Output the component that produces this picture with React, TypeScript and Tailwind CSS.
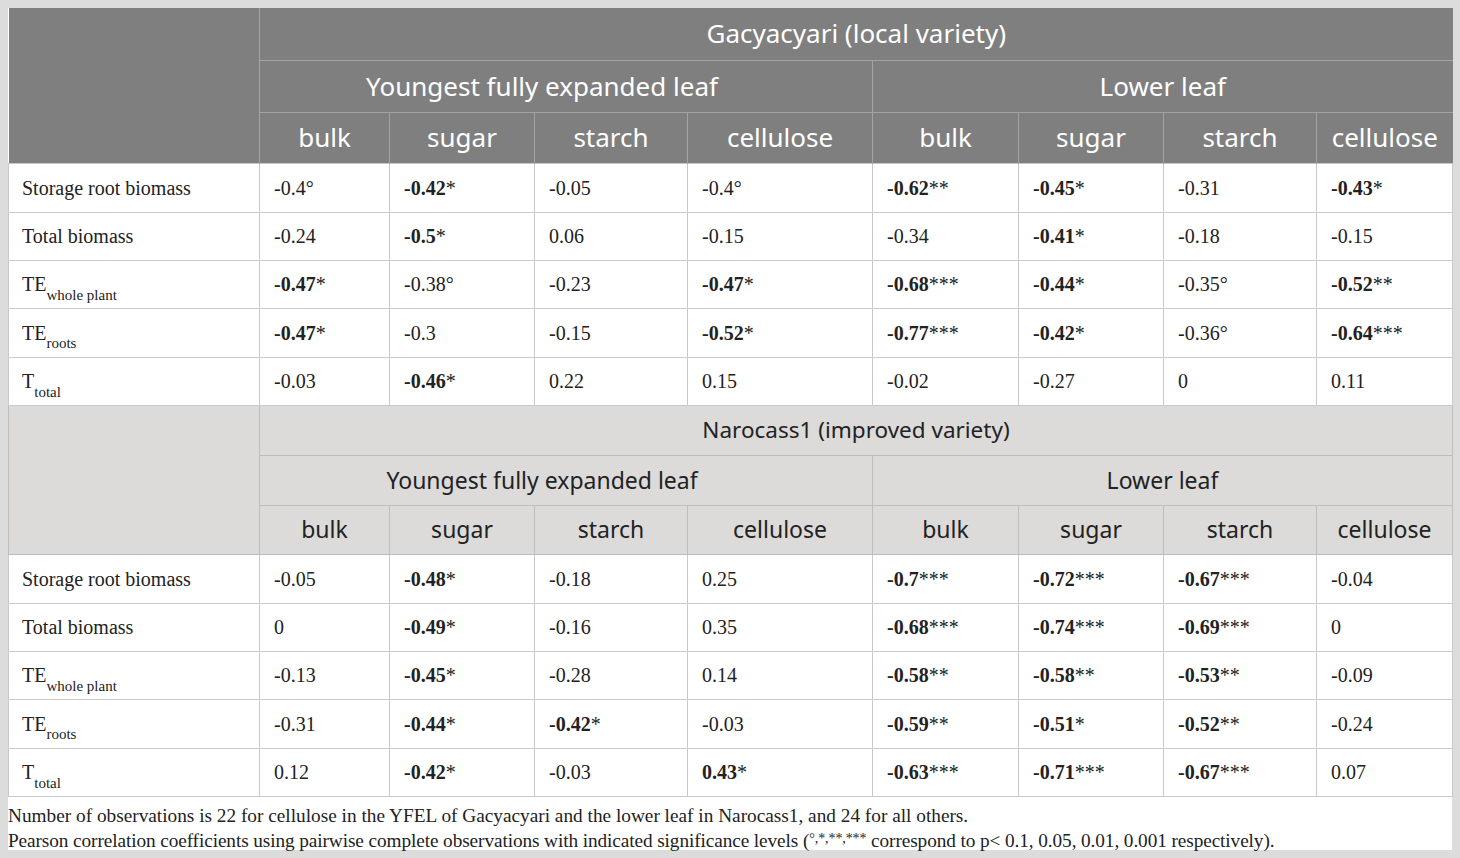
import React from 'react';

type Row = { label: React.ReactNode; values: string[] };

// '!' prefix marks a bold coefficient
const section1: Row[] = [
  { label: 'Storage root biomass', values: ['-0.4°', '!-0.42*', '-0.05', '-0.4°', '!-0.62**', '!-0.45*', '-0.31', '!-0.43*'] },
  { label: 'Total biomass', values: ['-0.24', '!-0.5*', '0.06', '-0.15', '-0.34', '!-0.41*', '-0.18', '-0.15'] },
  { label: 'whole', values: ['!-0.47*', '-0.38°', '-0.23', '!-0.47*', '!-0.68***', '!-0.44*', '-0.35°', '!-0.52**'] },
  { label: 'roots', values: ['!-0.47*', '-0.3', '-0.15', '!-0.52*', '!-0.77***', '!-0.42*', '-0.36°', '!-0.64***'] },
  { label: 'total', values: ['-0.03', '!-0.46*', '0.22', '0.15', '-0.02', '-0.27', '0', '0.11'] },
];

const section2: Row[] = [
  { label: 'Storage root biomass', values: ['-0.05', '!-0.48*', '-0.18', '0.25', '!-0.7***', '!-0.72***', '!-0.67***', '-0.04'] },
  { label: 'Total biomass', values: ['0', '!-0.49*', '-0.16', '0.35', '!-0.68***', '!-0.74***', '!-0.69***', '0'] },
  { label: 'whole', values: ['-0.13', '!-0.45*', '-0.28', '0.14', '!-0.58**', '!-0.58**', '!-0.53**', '-0.09'] },
  { label: 'roots', values: ['-0.31', '!-0.44*', '!-0.42*', '-0.03', '!-0.59**', '!-0.51*', '!-0.52**', '-0.24'] },
  { label: 'total', values: ['0.12', '!-0.42*', '-0.03', '!0.43*', '!-0.63***', '!-0.71***', '!-0.67***', '0.07'] },
];

const rowHeights = ['h-[49px]', 'h-[48px]', 'h-[48px]', 'h-[49px]', 'h-[48px]'];
const cols = ['bulk', 'sugar', 'starch', 'cellulose'];

const Label: React.FC<{ kind: React.ReactNode }> = ({ kind }) => {
  if (kind === 'whole')
    return (
      <span>
        TE<sub className="text-[15px] align-[-5px]">whole plant</sub>
      </span>
    );
  if (kind === 'roots')
    return (
      <span>
        TE<sub className="text-[15px] align-[-5px]">roots</sub>
      </span>
    );
  if (kind === 'total')
    return (
      <span>
        T<sub className="text-[15px] align-[-5px]">total</sub>
      </span>
    );
  return <span>{kind}</span>;
};

const Value: React.FC<{ v: string }> = ({ v }) => {
  const bold = v.startsWith('!');
  const raw = bold ? v.slice(1) : v;
  const m = raw.match(/^(-?[\d.]+)(.*)$/);
  const num = m ? m[1] : raw;
  const sig = m ? m[2] : '';
  return (
    <span>
      <span className={bold ? 'font-bold' : ''}>{num}</span>
      {sig}
    </span>
  );
};

const dataCell = 'border border-[#c9c9c9] pl-[14px] text-left align-middle';

const DataRows: React.FC<{ rows: Row[] }> = ({ rows }) => (
  <>
    {rows.map((r, i) => (
      <tr key={i} className={`${rowHeights[i]} bg-white`}>
        <td className="border border-[#c9c9c9] pl-[13px] align-middle">
          <Label kind={r.label} />
        </td>
        {r.values.map((v, j) => (
          <td key={j} className={dataCell}>
            <Value v={v} />
          </td>
        ))}
      </tr>
    ))}
  </>
);

export default function App() {
  return (
    <div className="w-[1460px] h-[858px] bg-[#dcdcdc] p-[8px]">
      <div className="bg-white h-[842px]">
        <table className="table-fixed border-collapse w-[1444px] text-[20px] text-[#222] font-['Liberation_Serif',serif]">
          <colgroup>
            <col className="w-[251px]" />
            <col className="w-[130px]" />
            <col className="w-[145px]" />
            <col className="w-[153px]" />
            <col className="w-[185px]" />
            <col className="w-[146px]" />
            <col className="w-[145px]" />
            <col className="w-[153px]" />
            <col className="w-[136px]" />
          </colgroup>
          <tbody>
            {/* Section 1 header */}
            <tr className="h-[52px] bg-[#7f7f7f] text-white font-['Noto_Sans',sans-serif]">
              <td rowSpan={3} className="border-r border-[#a3a3a3]" />
              <td colSpan={8} className="text-center text-[26px] border-b border-[#a3a3a3]">
                Gacyacyari (local variety)
              </td>
            </tr>
            <tr className="h-[52px] bg-[#7f7f7f] text-white font-['Noto_Sans',sans-serif]">
              <td colSpan={4} className="text-center text-[26px] pr-[48px] border border-[#a3a3a3]">
                Youngest fully expanded leaf
              </td>
              <td colSpan={4} className="text-center text-[26px] border-b border-[#a3a3a3]">
                Lower leaf
              </td>
            </tr>
            <tr className="h-[51px] bg-[#7f7f7f] text-white font-['Noto_Sans',sans-serif]">
              {[...cols, ...cols].map((c, i) => (
                <td key={i} className={`text-center text-[26px] border-[#a3a3a3] ${i < 7 ? 'border-r' : ''}`}>
                  {c}
                </td>
              ))}
            </tr>
            <DataRows rows={section1} />

            {/* Section 2 header */}
            <tr className="h-[50px] bg-[#dcdbda] text-[#222] font-['Noto_Sans',sans-serif]">
              <td rowSpan={3} className="border border-[#bdbdbd]" />
              <td colSpan={8} className="text-center text-[22.5px] border border-[#bdbdbd]">
                Narocass1 (improved variety)
              </td>
            </tr>
            <tr className="h-[50px] bg-[#dcdbda] text-[#222] font-['Noto_Sans',sans-serif]">
              <td colSpan={4} className="text-center text-[23px] pr-[48px] border border-[#bdbdbd]">
                Youngest fully expanded leaf
              </td>
              <td colSpan={4} className="text-center text-[23px] border border-[#bdbdbd]">
                Lower leaf
              </td>
            </tr>
            <tr className="h-[49px] bg-[#dcdbda] text-[#222] font-['Noto_Sans',sans-serif]">
              {[...cols, ...cols].map((c, i) => (
                <td key={i} className="text-center text-[23px] border border-[#bdbdbd]">
                  {c}
                </td>
              ))}
            </tr>
            <DataRows rows={section2} />
          </tbody>
        </table>
        <div className="pt-[6px] text-[19.3px] leading-[25px] text-[#222] font-['Liberation_Serif',serif]">
          <p>
            Number of observations is 22 for cellulose in the YFEL of Gacyacyari and the lower leaf in Narocass1, and 24 for all others.
          </p>
          <p className="tracking-[-0.1px]">
            Pearson correlation coefficients using pairwise complete observations with indicated significance levels (
            <span className="text-[14px] leading-none align-[4px]">°,*,**,***</span> correspond to p&lt; 0.1, 0.05, 0.01, 0.001 respectively).
          </p>
        </div>
      </div>
    </div>
  );
}
